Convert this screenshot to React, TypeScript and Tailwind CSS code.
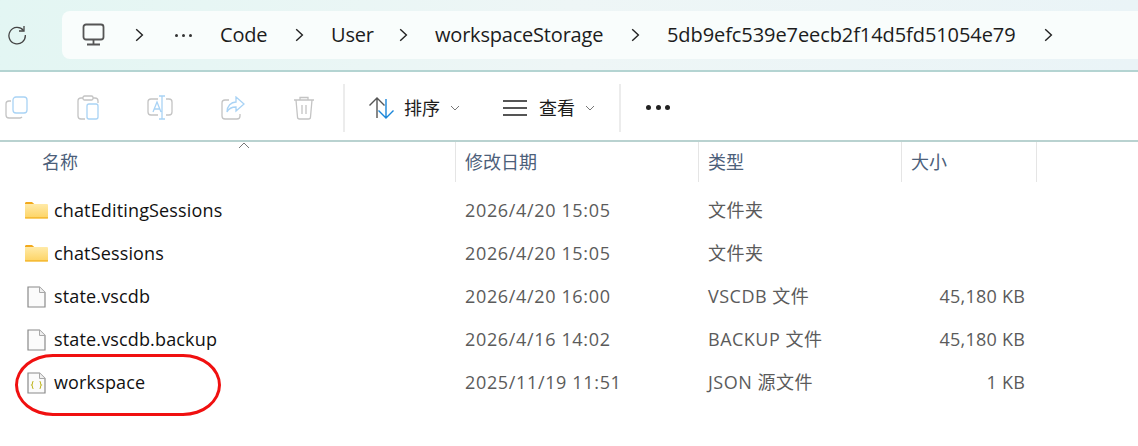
import React from 'react';

const font = { fontFamily: '"Open Sans", "Noto Sans CJK SC", sans-serif' };

function Chevron({ className }: { className: string }) {
    return (
        <svg width="9" height="14" viewBox="0 0 9 14" fill="none" stroke="#222" strokeWidth="1.4" className={className}>
            <path d="M1.2 1.2 7.4 7 1.2 12.8" />
        </svg>
    );
}

function Folder() {
    return (
        <svg width="23" height="18" viewBox="0 0 23 18" className="ml-[25px] mr-[6px] -mt-[2px] shrink-0">
            <defs>
                <linearGradient id="fold" x1="0" y1="0" x2="0" y2="1">
                    <stop offset="0" stopColor="#ffeaa8" />
                    <stop offset="1" stopColor="#fdd362" />
                </linearGradient>
            </defs>
            <path d="M0 2.5C0 1.5.7 1 1.5 1h5.5l2.5 2.2H0z" fill="#f2a91c" />
            <rect x="0" y="3" width="23" height="14.5" rx="1" fill="url(#fold)" />
            <rect x="0" y="16.2" width="23" height="1.3" fill="#f3b52c" />
        </svg>
    );
}

function FileIcon({ json }: { json?: boolean }) {
    return (
        <svg width="19" height="22" viewBox="0 0 19 22" fill="none" className="ml-[27px] mr-[8px] shrink-0">
            <path d="M1 1h11.5L18 6.5V21H1z" fill="#fbfbfb" stroke="#8a8a8a" strokeWidth="1.2" />
            <path d="M12.5 1v5.5H18" fill="#f0f0f0" stroke="#a8a8a8" strokeWidth="1" />
            {json && (
                <g stroke="#c2b92c" strokeWidth="1.1">
                    <path d="M6.5 9.5c-1.2 0-1 .8-1 1.6s0 1.4-.9 1.9c.9.5.9 1.1.9 1.9s-.2 1.6 1 1.6" />
                    <path d="M12.5 9.5c1.2 0 1 .8 1 1.6s0 1.4.9 1.9c-.9.5-.9 1.1-.9 1.9s.2 1.6-1 1.6" />
                </g>
            )}
        </svg>
    );
}

const rows = [
    { name: 'chatEditingSessions', date: '2026/4/20 15:05', type: '文件夹', size: '', kind: 'folder' },
    { name: 'chatSessions', date: '2026/4/20 15:05', type: '文件夹', size: '', kind: 'folder' },
    { name: 'state.vscdb', date: '2026/4/20 16:00', type: 'VSCDB 文件', size: '45,180 KB', kind: 'file' },
    { name: 'state.vscdb.backup', date: '2026/4/16 14:02', type: 'BACKUP 文件', size: '45,180 KB', kind: 'file' },
    { name: 'workspace', date: '2025/11/19 11:51', type: 'JSON 源文件', size: '1 KB', kind: 'json' },
];

export default function App() {
    return (
        <div style={font} className="relative w-[1138px] h-[446px] overflow-hidden bg-white">
            {/* address bar */}
            <div className="flex h-[72px] items-start border-b-2 border-[#b4d4d2] bg-gradient-to-r from-[#e3f6f3] via-[#eef6f6] to-[#eaf4f7]">
                <svg width="20" height="20" viewBox="0 0 20 20" fill="none" stroke="#444" strokeWidth="1.3" className="ml-[7px] mt-[25px] shrink-0">
                    <path d="M16.5 5.5A8.2 8.2 0 1 0 18.3 10" />
                    <path d="M17 1v5h-5" />
                </svg>
                <div className="ml-[35px] mt-[11px] flex h-[48px] flex-1 items-center rounded-l-lg bg-[#f9fdfc] text-[20px] text-[#1c1c1c]">
                    <svg width="24" height="24" viewBox="0 0 24 24" fill="none" stroke="#555" strokeWidth="1.8" className="ml-[20px] shrink-0">
                        <rect x="1.5" y="1.5" width="20" height="15" rx="2.5" />
                        <path d="M11.5 17v4M5 21.5h13" />
                    </svg>
                    <Chevron className="ml-[29px] shrink-0" />
                    <div className="ml-[31px] flex w-[17px] justify-between">
                        <span className="size-[3px] rounded-full bg-[#333]" />
                        <span className="size-[3px] rounded-full bg-[#333]" />
                        <span className="size-[3px] rounded-full bg-[#333]" />
                    </div>
                    <span className="ml-[28px] w-[50px] tracking-[-0.2px]">Code</span>
                    <Chevron className="ml-[25px] shrink-0" />
                    <span className="ml-[27px] w-[42px] tracking-[-0.2px]">User</span>
                    <Chevron className="ml-[26px] shrink-0" />
                    <span className="ml-[27px] w-[170px] whitespace-nowrap tracking-[-0.2px]">workspaceStorage</span>
                    <Chevron className="ml-[26px] shrink-0" />
                    <span className="ml-[27px] w-[349px] whitespace-nowrap tracking-[-0.08px]">5db9efc539e7eecb2f14d5fd51054e79</span>
                    <Chevron className="ml-[28px] shrink-0" />
                </div>
            </div>

            {/* toolbar */}
            <div className="flex h-[70px] items-center border-b-2 border-[#b9d2d0] pt-[3px] text-[#1c1c1c]">
                <svg width="24" height="24" viewBox="0 0 24 24" fill="none" strokeWidth="1.3" className="ml-[5px] shrink-0">
                    <path d="M6 5H4a3 3 0 0 0-3 3v11a3 3 0 0 0 3 3h11a3 3 0 0 0 2-1" stroke="#c4c4c4" />
                    <rect x="8" y="1" width="14" height="16" rx="3" stroke="#a9d3f5" />
                </svg>
                <svg width="22" height="25" viewBox="0 0 22 25" fill="none" strokeWidth="1.3" className="ml-[48px] shrink-0">
                    <path d="M6 3H4a3 3 0 0 0-3 3v15a3 3 0 0 0 3 3h4M16 3h2a3 3 0 0 1 3 3v2" stroke="#c4c4c4" />
                    <rect x="6" y="1" width="10" height="4" rx="1.5" stroke="#c4c4c4" />
                    <rect x="10" y="9" width="11" height="15" rx="2" stroke="#a9d3f5" />
                </svg>
                <svg width="26" height="25" viewBox="0 0 26 25" fill="none" strokeWidth="1.3" className="ml-[48px] shrink-0">
                    <path d="M11 4H4a3 3 0 0 0-3 3v10a3 3 0 0 0 3 3h7M19 4h3a3 3 0 0 1 3 3v10a3 3 0 0 1-3 3h-3" stroke="#c4c4c4" />
                    <path d="M15 1v23M12 1h6M12 24h6M6 17l4-10 4 10M7.5 14h5" stroke="#a9d3f5" />
                </svg>
                <svg width="24" height="24" viewBox="0 0 24 24" fill="none" strokeWidth="1.3" className="ml-[48px] shrink-0">
                    <path d="M8 4H4a3 3 0 0 0-3 3v13a3 3 0 0 0 3 3h12a3 3 0 0 0 3-3v-2" stroke="#c4c4c4" />
                    <path d="M15 1l8 7-8 7v-4c-4 0-7 1-9 5 0-6 4-10 9-10z" stroke="#a9d3f5" />
                </svg>
                <svg width="22" height="24" viewBox="0 0 22 24" fill="none" stroke="#c4c4c4" strokeWidth="1.3" className="ml-[48px] shrink-0">
                    <path d="M1 4h20M7 4V1.5h8V4M3 4l1.5 17a2 2 0 0 0 2 2h9a2 2 0 0 0 2-2L19 4M9 9v9M13 9v9" />
                </svg>
                <div className="ml-[28px] h-[48px] w-[2px] bg-[#ececec]" />
                <svg width="26" height="22" viewBox="0 0 26 22" fill="none" strokeWidth="1.4" className="ml-[23px] shrink-0">
                    <path d="M9 21V1M1.5 8.5 9 1l7.5 7.5" stroke="#555" />
                    <path d="M18 2v19M10.5 13.5 18 21l7.5-7.5" stroke="#1a86d9" />
                </svg>
                <span className="ml-[10px] text-[18px] leading-none">排序</span>
                <svg width="10" height="6" viewBox="0 0 10 6" fill="none" stroke="#777" strokeWidth="1" className="ml-[10px] shrink-0">
                    <path d="M1 1l4 4 4-4" />
                </svg>
                <div className="ml-[43px] flex h-[16px] w-[24px] flex-col justify-between">
                    <span className="h-[2px] bg-[#555]" />
                    <span className="h-[2px] bg-[#555]" />
                    <span className="h-[2px] bg-[#555]" />
                </div>
                <span className="ml-[12px] text-[18px] leading-none">查看</span>
                <svg width="10" height="6" viewBox="0 0 10 6" fill="none" stroke="#777" strokeWidth="1" className="ml-[10px] shrink-0">
                    <path d="M1 1l4 4 4-4" />
                </svg>
                <div className="ml-[24px] h-[48px] w-[2px] bg-[#ececec]" />
                <div className="ml-[25px] flex w-[24px] justify-between">
                    <span className="size-[5px] rounded-full bg-[#222]" />
                    <span className="size-[5px] rounded-full bg-[#222]" />
                    <span className="size-[5px] rounded-full bg-[#222]" />
                </div>
            </div>

            {/* column headers */}
            <div className="flex h-[40px] text-[#4c607a] text-[18px]">
                <div className="relative w-[456px] border-r border-[#e5e5e5] pl-[42px] pt-[7px]">
                    名称
                    <svg width="12" height="7" viewBox="0 0 12 7" fill="none" stroke="#777" strokeWidth="1" className="absolute left-[238px] top-0">
                        <path d="M1 6l5-5 5 5" />
                    </svg>
                </div>
                <div className="w-[243px] border-r border-[#e5e5e5] pl-[9px] pt-[7px]">修改日期</div>
                <div className="w-[203px] border-r border-[#e5e5e5] pl-[9px] pt-[7px]">类型</div>
                <div className="w-[135px] border-r border-[#e5e5e5] pl-[9px] pt-[7px]">大小</div>
            </div>

            {/* file rows */}
            <div className="flex flex-col pt-[7px]">
                {rows.map((row) => (
                    <div key={row.name} className="flex h-[43px] items-center text-[18px] tracking-[0.15px]">
                        <div className="flex w-[465px] items-center text-[#111]">
                            {row.kind === 'folder' ? <Folder /> : <FileIcon json={row.kind === 'json'} />}
                            <span>{row.name}</span>
                        </div>
                        <div className="w-[243px] tracking-[0.65px] text-[#5b5b5b]">{row.date}</div>
                        <div className="w-[200px] tracking-[0.5px] text-[#5b5b5b]">{row.type}</div>
                        <div className="w-[117px] text-right tracking-[0.23px] text-[#5b5b5b]">{row.size}</div>
                    </div>
                ))}
            </div>

            {/* red annotation around workspace */}
            <div className="absolute left-[15px] top-[354px] h-[62px] w-[206px] rounded-[38px/31px] border-[3px] border-[#f01010]" />
        </div>
    );
}
